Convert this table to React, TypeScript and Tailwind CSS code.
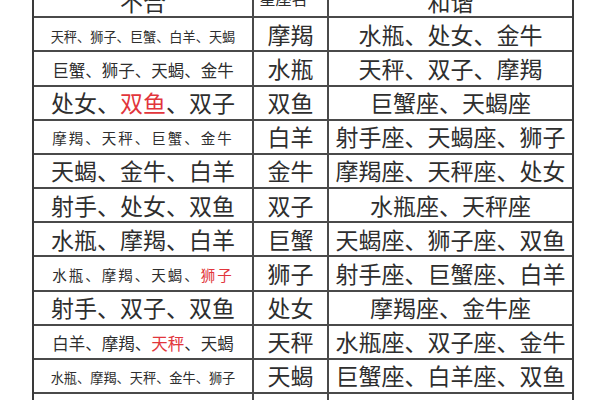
type Seg = { t: string; red?: boolean };
type Row = { bad: Seg[]; size: "xs" | "sm" | "smt" | "lg"; name: string; good: string };

const sizeClass: Record<Row["size"], string> = {
  xs: "text-[13.2px] pt-[4px]",
  sm: "text-[16.5px] pt-[3px]",
  smt: "text-[14.5px] tracking-[2px] pt-[3px]",
  lg: "text-[23px]",
};

const rows: Row[] = [
  { bad: [{ t: "天秤、狮子、巨蟹、白羊、天蝎" }], size: "xs", name: "摩羯", good: "水瓶、处女、金牛" },
  { bad: [{ t: "巨蟹、狮子、天蝎、金牛" }], size: "sm", name: "水瓶", good: "天秤、双子、摩羯" },
  { bad: [{ t: "处女、" }, { t: "双鱼", red: true }, { t: "、双子" }], size: "lg", name: "双鱼", good: "巨蟹座、天蝎座" },
  { bad: [{ t: "摩羯、天秤、巨蟹、金牛" }], size: "smt", name: "白羊", good: "射手座、天蝎座、狮子" },
  { bad: [{ t: "天蝎、金牛、白羊" }], size: "lg", name: "金牛", good: "摩羯座、天秤座、处女" },
  { bad: [{ t: "射手、处女、双鱼" }], size: "lg", name: "双子", good: "水瓶座、天秤座" },
  { bad: [{ t: "水瓶、摩羯、白羊" }], size: "lg", name: "巨蟹", good: "天蝎座、狮子座、双鱼" },
  { bad: [{ t: "水瓶、摩羯、天蝎、" }, { t: "狮子", red: true }], size: "smt", name: "狮子", good: "射手座、巨蟹座、白羊" },
  { bad: [{ t: "射手、双子、双鱼" }], size: "lg", name: "处女", good: "摩羯座、金牛座" },
  { bad: [{ t: "白羊、摩羯、" }, { t: "天秤", red: true }, { t: "、天蝎" }], size: "sm", name: "天秤", good: "水瓶座、双子座、金牛" },
  { bad: [{ t: "水瓶、摩羯、天秤、金牛、狮子" }], size: "xs", name: "天蝎", good: "巨蟹座、白羊座、双鱼" },
  { bad: [{ t: "处女、双子、双鱼" }], size: "lg", name: "射手", good: "白羊座、狮子座" },
];

export default function App() {
  return (
    <div
      className="w-[600px] h-[400px] overflow-hidden bg-white text-[#2e2e2e]"
      style={{ fontFamily: '"Noto Sans CJK SC", "Noto Sans", sans-serif' }}
    >
      <div className="ml-[32px] -mt-[16px] w-[542px] border-x-2 border-[#3a3a3a]">
        {/* header, mostly cut off at the top */}
        <div className="grid grid-cols-[220px_75px_1fr] h-[34.18px] border-b-2 border-[#4a4a4a] leading-none">
          <div className="flex items-center justify-center border-r-2 border-[#4a4a4a] text-[23px] pt-[2px]">
            不合
          </div>
          <div className="flex items-center justify-center border-r-2 border-[#4a4a4a] text-[16px] pr-[14px] -mt-[4px]">
            星座名
          </div>
          <div className="flex items-center justify-center text-[23px] pt-[2px]">和谐</div>
        </div>

        {rows.map((r) => (
          <div
            key={r.name}
            className="grid grid-cols-[220px_75px_1fr] h-[34.18px] border-b-2 border-[#4a4a4a] leading-none"
          >
            <div
              className={`flex items-center justify-center border-r-2 border-[#4a4a4a] whitespace-nowrap ${sizeClass[r.size]}`}
            >
              {r.bad.map((s, i) => (
                <span key={i} className={s.red ? "text-[#e2363c]" : undefined}>
                  {s.t}
                </span>
              ))}
            </div>
            <div className="flex items-center justify-center border-r-2 border-[#4a4a4a] text-[23px]">
              {r.name}
            </div>
            <div className="flex items-center justify-center text-[23px] whitespace-nowrap">{r.good}</div>
          </div>
        ))}
      </div>
    </div>
  );
}
